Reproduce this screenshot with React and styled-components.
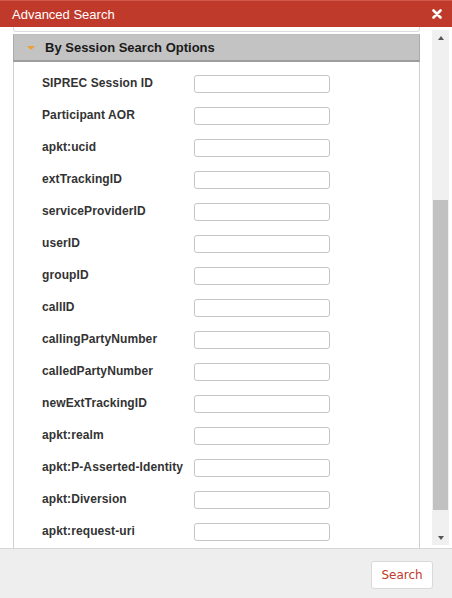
import styled, { createGlobalStyle } from 'styled-components';

const GlobalStyle = createGlobalStyle`
  html, body {
    margin: 0;
    padding: 0;
    background: #ffffff;
  }
  body {
    font-family: 'Liberation Sans', Arial, sans-serif;
  }
`;

const fields = [
  'SIPREC Session ID',
  'Participant AOR',
  'apkt:ucid',
  'extTrackingID',
  'serviceProviderID',
  'userID',
  'groupID',
  'callID',
  'callingPartyNumber',
  'calledPartyNumber',
  'newExtTrackingID',
  'apkt:realm',
  'apkt:P-Asserted-Identity',
  'apkt:Diversion',
  'apkt:request-uri',
];

const Dialog = styled.div`
  width: 452px;
  height: 598px;
  display: flex;
  flex-direction: column;
  overflow: hidden;
`;

const TitleBar = styled.div`
  height: 27px;
  background: #bf3a2b;
  border-top: 1px solid #d0594b;
  box-sizing: border-box;
  display: flex;
  align-items: center;
  justify-content: space-between;
  padding: 0 10px 0 12px;
  color: #ffffff;
  font-size: 13px;
`;

const CloseBtn = styled.span`
  display: flex;
  align-items: center;
  cursor: pointer;
`;

const Body = styled.div`
  height: 521px;
  display: flex;
  background: #ffffff;
`;

const Viewport = styled.div`
  flex: 1;
  overflow: hidden;
  display: flex;
  flex-direction: column;
  padding: 0 12px 0 13px;
`;

const PrevEdge = styled.div`
  height: 4px;
  border: 1px solid #dcdcdc;
  border-top: none;
  border-radius: 0 0 3px 3px;
  margin-bottom: 2px;
`;

const SectionHead = styled.div`
  height: 28px;
  box-sizing: border-box;
  background: #c3c3c3;
  border: 1px solid #ababab;
  border-top-color: #bdbdbd;
  border-bottom: 2px solid #9d9d9d;
  display: flex;
  align-items: center;
  gap: 10px;
  padding-left: 13px;
  font-size: 13px;
  font-weight: bold;
  color: #1a1a1a;
`;

const Caret = styled.span`
  width: 0;
  height: 0;
  border-left: 4px solid transparent;
  border-right: 4px solid transparent;
  border-top: 4px solid #f0a030;
  margin-top: 1px;
`;

const Panel = styled.div`
  flex: 1;
  border-left: 1px solid #cfcfcf;
  border-right: 1px solid #cfcfcf;
  padding-top: 5px;
  overflow: hidden;
`;

const Row = styled.div`
  height: 32px;
  display: grid;
  grid-template-columns: 152px 136px;
  align-items: center;
  padding-left: 28px;
`;

const Label = styled.label`
  font-size: 12px;
  font-weight: bold;
  color: #333333;
  letter-spacing: 0.1px;
`;

const Field = styled.input`
  width: 136px;
  height: 18px;
  box-sizing: border-box;
  border: 1px solid #c4c4c4;
  border-radius: 3px;
  background: #ffffff;
  margin-top: 2px;
`;

const ScrollTrack = styled.div`
  width: 17px;
  margin: 3px 3px 3px 0;
  background: #f0f0f0;
  display: flex;
  flex-direction: column;
  align-items: center;
`;

const ArrowBox = styled.div`
  height: 15px;
  width: 100%;
  display: flex;
  align-items: center;
  justify-content: center;
`;

const Arrow = styled.span`
  width: 0;
  height: 0;
  border-left: 3.5px solid transparent;
  border-right: 3.5px solid transparent;
  ${(p) => (p.$up ? 'border-bottom: 4px solid #555;' : 'border-top: 4px solid #555;')}
`;

const TrackSpace = styled.div`
  flex: 1;
  width: 100%;
  display: flex;
  flex-direction: column;
  padding-top: 155px;
  padding-bottom: 20px;
  box-sizing: border-box;
`;

const Thumb = styled.div`
  flex: 1;
  margin: 0 1px;
  background: #c1c1c1;
`;

const Footer = styled.div`
  flex: 1;
  background: #eeeeee;
  border-top: 1px solid #d6d6d6;
  display: flex;
  align-items: center;
  justify-content: flex-end;
  padding-right: 19px;
`;

const SearchBtn = styled.button`
  width: 62px;
  height: 28px;
  margin-top: 2px;
  background: #ffffff;
  border: 1px solid #d9d9d9;
  border-radius: 3px;
  color: #c0392b;
  font-family: 'DejaVu Sans', Tahoma, sans-serif;
  font-size: 12px;
  cursor: pointer;
`;

export default function App() {
  return (
    <>
      <GlobalStyle />
      <Dialog>
        <TitleBar>
          <span>Advanced Search</span>
          <CloseBtn>
            <svg width="10" height="10" viewBox="0 0 10 10">
              <path d="M1.5 1.5 L8.5 8.5 M8.5 1.5 L1.5 8.5" stroke="#fff" strokeWidth="2.6" strokeLinecap="round" />
            </svg>
          </CloseBtn>
        </TitleBar>
        <Body>
          <Viewport>
            <PrevEdge />
            <SectionHead>
              <Caret />
              <span>By Session Search Options</span>
            </SectionHead>
            <Panel>
              {fields.map((f) => (
                <Row key={f}>
                  <Label>{f}</Label>
                  <Field type="text" />
                </Row>
              ))}
            </Panel>
          </Viewport>
          <ScrollTrack>
            <ArrowBox>
              <Arrow $up />
            </ArrowBox>
            <TrackSpace>
              <Thumb />
            </TrackSpace>
            <ArrowBox>
              <Arrow />
            </ArrowBox>
          </ScrollTrack>
        </Body>
        <Footer>
          <SearchBtn>Search</SearchBtn>
        </Footer>
      </Dialog>
    </>
  );
}
